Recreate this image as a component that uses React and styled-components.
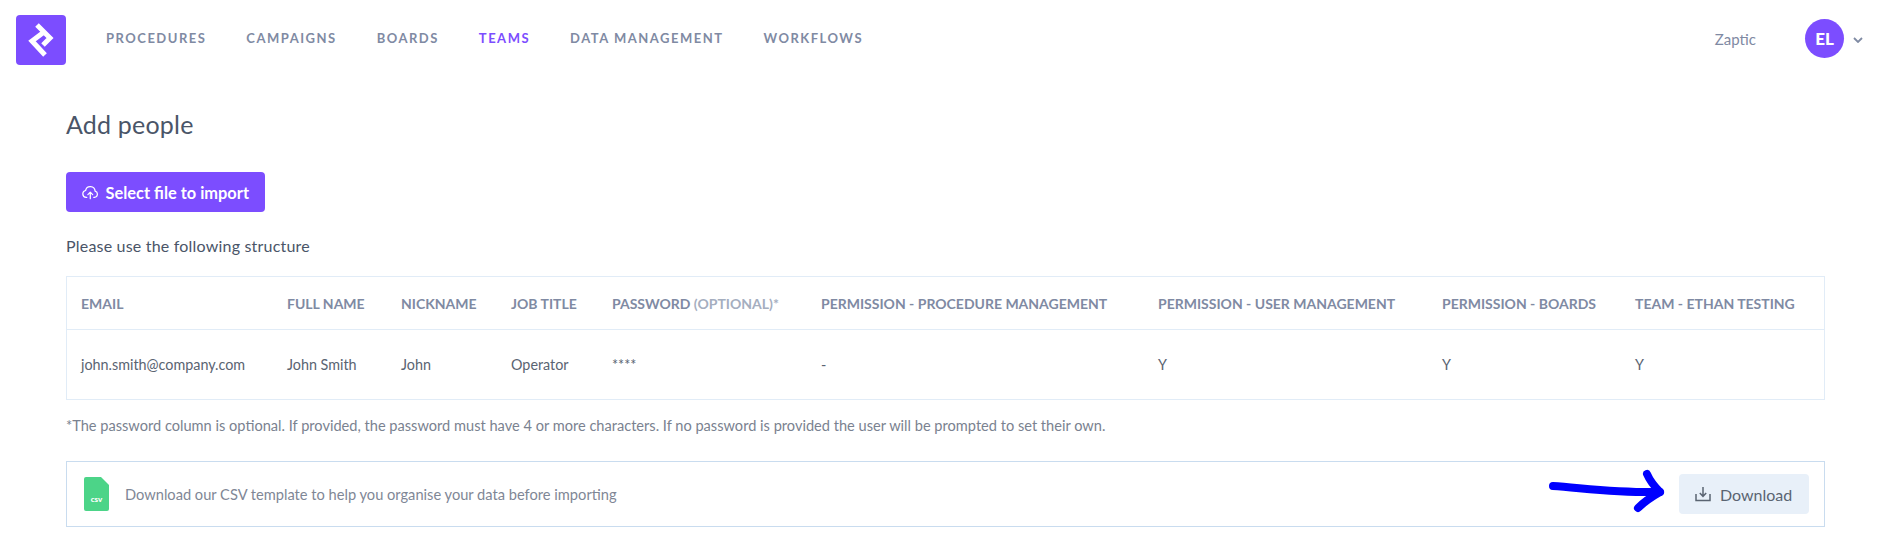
import React from 'react';
import styled, { createGlobalStyle } from 'styled-components';

const purple = '#7c4dff';
const font = `Lato, "Open Sans", "Liberation Sans", sans-serif`;

const GlobalStyle = createGlobalStyle`
  html, body { margin: 0; padding: 0; background: #fff; }
  body { font-family: ${font}; }
`;

const Header = styled.header`
  display: flex;
  align-items: center;
  height: 80px;
  padding: 0 15px 0 16px;
  box-sizing: border-box;
`;
const Logo = styled.div`
  width: 50px;
  height: 50px;
  border-radius: 4px;
  background: ${purple};
  display: flex;
  align-items: center;
  justify-content: center;
`;
const Nav = styled.nav`
  display: flex;
  gap: 40px;
  margin-left: 40px;
  flex: 1;
  margin-top: -4px;
`;
const NavLink = styled.a`
  font-size: 13px;
  font-weight: 700;
  letter-spacing: 1.5px;
  color: ${({ $active }) => ($active ? purple : '#7f8aa3')};
`;
const Org = styled.span`
  font-size: 15px;
  color: #7f8aa3;
  margin: -3px 49px 0 0;
`;
const Avatar = styled.div`
  width: 39px;
  height: 39px;
  margin-top: -3px;
  border-radius: 50%;
  background: ${purple};
  color: #fff;
  font-size: 17px;
  font-weight: 900;
  display: flex;
  align-items: center;
  justify-content: center;
`;
const Caret = styled.svg`
  margin: -1px 0 0 9px;
`;
const Main = styled.main`
  padding: 30px 53px 0 66px;
`;
const Title = styled.h1`
  margin: 0;
  font-size: 25px;
  line-height: 29px;
  font-weight: 400;
  letter-spacing: 0.2px;
  color: #4a5568;
`;
const ImportButton = styled.button`
  display: flex;
  align-items: center;
  gap: 7px;
  width: 199px;
  height: 40px;
  margin-top: 33px;
  padding: 0 16px;
  border: 0;
  border-radius: 4px;
  background: ${purple};
  color: #fff;
  white-space: nowrap;
  font: 700 16.4px ${font};
`;
const Hint = styled.p`
  margin: 24px 0 0;
  font-size: 16px;
  line-height: 20px;
  letter-spacing: 0.2px;
  color: #4a5568;
`;
const Table = styled.div`
  margin-top: 20px;
  border: 1px solid #e1ecf7;
`;
const Row = styled.div`
  display: grid;
  grid-template-columns: 206px 114px 110px 101px 209px 337px 284px 193px 1fr;
  align-items: center;
  height: ${({ $head }) => ($head ? '52px' : '69px')};
  border-top: ${({ $head }) => ($head ? '0' : '1px solid #e1ecf7')};
`;
const HeadCell = styled.div`
  padding-left: 14px;
  font-size: 14px;
  font-weight: 700;
  white-space: nowrap;
  color: #7f8aa3;
`;
const Muted = styled.span`
  color: #a5aebf;
`;
const Cell = styled.div`
  padding-left: 14px;
  font-size: 14.35px;
  white-space: nowrap;
  color: #5a6472;
`;
const Note = styled.p`
  margin: 16px 0 0;
  font-size: 14.6px;
  line-height: 20px;
  color: #7a8290;
`;
const DownloadBox = styled.div`
  display: flex;
  align-items: center;
  height: 66px;
  box-sizing: border-box;
  margin-top: 25px;
  padding: 0 15px 0 17px;
  border: 1px solid #c9dcef;
`;
const DownloadText = styled.span`
  flex: 1;
  margin-left: 16px;
  font-size: 14.65px;
  color: #7f8796;
`;
const Arrow = styled.svg`
  margin-right: 14px;
`;
const DownloadButton = styled.button`
  display: flex;
  align-items: center;
  gap: 9px;
  width: 130px;
  height: 40px;
  padding: 0 16px;
  border: 0;
  border-radius: 4px;
  background: #e8f0f9;
  color: #5a6472;
  font: 400 16px ${font};
`;

const columns = [
  ['Email', 'john.smith@company.com'],
  ['Full name', 'John Smith'],
  ['Nickname', 'John'],
  ['Job title', 'Operator'],
  ['Password', '****'],
  ['Permission - procedure management', '-'],
  ['Permission - user management', 'Y'],
  ['Permission - boards', 'Y'],
  ['Team - Ethan testing', 'Y'],
];

export default function App() {
  return (
    <>
      <GlobalStyle />
      <Header>
        <Logo>
          <svg width="30" height="36" viewBox="0 0 30 36" fill="none" stroke="#fff" strokeWidth="5">
            <path d="M11 3l13 13-7 7" />
            <path d="M18 10l-12 9 13 14" />
          </svg>
        </Logo>
        <Nav>
          <NavLink>PROCEDURES</NavLink>
          <NavLink>CAMPAIGNS</NavLink>
          <NavLink>BOARDS</NavLink>
          <NavLink $active>TEAMS</NavLink>
          <NavLink>DATA MANAGEMENT</NavLink>
          <NavLink>WORKFLOWS</NavLink>
        </Nav>
        <Org>Zaptic</Org>
        <Avatar>EL</Avatar>
        <Caret width="10" height="6" viewBox="0 0 10 6" fill="none" stroke="#7f8aa3" strokeWidth="1.8">
          <path d="M1 1l4 4 4-4" />
        </Caret>
      </Header>
      <Main>
        <Title>Add people</Title>
        <ImportButton>
          <svg width="17" height="15" viewBox="0 0 24 20" fill="none" stroke="#fff" strokeWidth="1.8" strokeLinecap="round" strokeLinejoin="round">
            <path d="M7 17H6a5 5 0 0 1-.8-9.9A7 7 0 0 1 19 8a4.6 4.6 0 0 1-1 9h-1" />
            <path d="M12 19v-9M8.5 13L12 9.5l3.5 3.5" />
          </svg>
          Select file to import
        </ImportButton>
        <Hint>Please use the following structure</Hint>
        <Table>
          <Row $head>
            {columns.map(([label]) => (
              <HeadCell key={label}>
                {label.toUpperCase()}
                {label === 'Password' && <Muted> (OPTIONAL)*</Muted>}
              </HeadCell>
            ))}
          </Row>
          <Row>
            {columns.map(([label, value]) => (
              <Cell key={label}>{value}</Cell>
            ))}
          </Row>
        </Table>
        <Note>*The password column is optional. If provided, the password must have 4 or more characters. If no password is provided the user will be prompted to set their own.</Note>
        <DownloadBox>
          <svg width="25" height="34" viewBox="0 0 25 34">
            <path d="M2 0h15l8 8v24a2 2 0 0 1-2 2H2a2 2 0 0 1-2-2V2a2 2 0 0 1 2-2z" fill="#4cd488" />
            <text x="12.5" y="24.5" textAnchor="middle" fontSize="8" fontWeight="900" fill="#fff" fontFamily="Lato">csv</text>
          </svg>
          <DownloadText>Download our CSV template to help you organise your data before importing</DownloadText>
          <Arrow width="122" height="52" viewBox="0 0 122 52" fill="none" stroke="#0000ff" strokeWidth="8" strokeLinecap="round" strokeLinejoin="round">
            <path d="M10 18c30 2 65 7 107 6" />
            <path d="M104 6c3 7 7 12 13 18-7 4-15 9-22 16" />
          </Arrow>
          <DownloadButton>
            <svg width="16" height="16" viewBox="0 0 16 16" fill="none" stroke="#5a6472" strokeWidth="1.5">
              <path d="M1 8v6.5h14V8M8 1v9M4.8 7L8 10.3 11.2 7" />
            </svg>
            Download
          </DownloadButton>
        </DownloadBox>
      </Main>
    </>
  );
}
